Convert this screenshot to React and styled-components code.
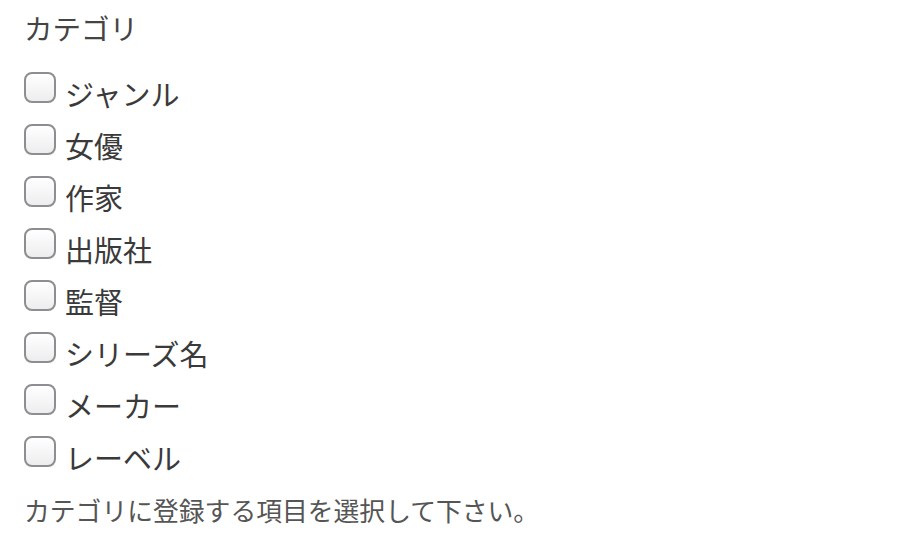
import React from "react";
import styled, { createGlobalStyle } from "styled-components";

const Global = createGlobalStyle`
  html, body { margin: 0; padding: 0; background: #fff; }
  body { font-family: "Noto Sans CJK JP", "Noto Sans", sans-serif; color: #444; }
`;

const Wrap = styled.div`
  padding: 8px 24px;
`;

const Title = styled.div`
  font-size: 28.5px;
  line-height: 40px;
  color: #444;
  margin-bottom: 23px;
`;

const List = styled.div`
  display: flex;
  flex-direction: column;
  gap: 20px;
`;

const Row = styled.label`
  display: flex;
  align-items: center;
  gap: 9px;
  height: 32px;
`;

const Box = styled.span`
  width: 28px;
  height: 27px;
  border: 2px solid #8e8e92;
  border-radius: 8px;
  background: linear-gradient(#ffffff, #ededed);
  flex: none;
`;

const Label = styled.span`
  font-size: 29px;
  line-height: 32px;
  color: #3a3a3a;
  position: relative;
  top: 6px;
`;

const Help = styled.div`
  margin-top: 27px;
  font-size: 25.8px;
  line-height: 32px;
  color: #555;
`;

const items = ["ジャンル", "女優", "作家", "出版社", "監督", "シリーズ名", "メーカー", "レーベル"];

export default function App() {
  return (
    <>
      <Global />
      <Wrap>
        <Title>カテゴリ</Title>
        <List>
          {items.map((t) => (
            <Row key={t}>
              <Box />
              <Label>{t}</Label>
            </Row>
          ))}
        </List>
        <Help>カテゴリに登録する項目を選択して下さい。</Help>
      </Wrap>
    </>
  );
}
